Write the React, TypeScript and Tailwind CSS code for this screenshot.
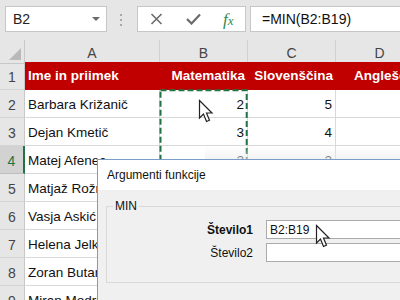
import React from "react";

const Cursor = () => (
  <svg width="17" height="26" viewBox="0 0 17 26">
    <path
      d="M1.5 1.5 L1.5 19 L5.5 15 L8.5 22.5 L11.5 21.2 L8.5 14 L14 14 Z"
      fill="white"
      stroke="#222"
      strokeWidth="1.2"
      strokeLinejoin="miter"
    />
  </svg>
);

const rows: [string, string, string][] = [
  ["Barbara Križanič", "2", "5"],
  ["Dejan Kmetič", "3", "4"],
  ["Matej Afenec", "2", "2"],
  ["Matjaž Rožman", "4", "3"],
  ["Vasja Askić", "5", "5"],
  ["Helena Jelkič", "3", "4"],
  ["Zoran Butara", "4", "2"],
  ["Miran Modrič", "5", "3"],
];

export default function App() {
  return (
    <div className="relative w-[400px] h-[300px] overflow-hidden bg-white font-['Liberation_Sans',sans-serif]">
      {/* toolbar */}
      <div className="h-[40px] bg-[#e6e6e6] flex items-start pt-[6px]">
        <div className="ml-[5px] w-[102px] h-[26px] shrink-0 bg-white border border-[#c6c6c6] flex items-center justify-between pl-[7px] pr-[6px]">
          <span className="text-[14px] text-[#222]">B2</span>
          <span className="w-0 h-0 border-l-[4px] border-r-[4px] border-t-[4px] border-l-transparent border-r-transparent border-t-[#6a6a6a]" />
        </div>
        <div className="ml-[13px] mt-[8px] flex flex-col gap-[3px] shrink-0">
          <span className="w-[2px] h-[2px] bg-[#a8a8a8]" />
          <span className="w-[2px] h-[2px] bg-[#a8a8a8]" />
          <span className="w-[2px] h-[2px] bg-[#a8a8a8]" />
        </div>
        <div className="ml-[15px] w-[109px] h-[26px] shrink-0 bg-white border border-[#c6c6c6] flex items-center">
          <svg className="ml-[12px]" width="13" height="12" viewBox="0 0 13 12">
            <path d="M1.5 1 L11.5 11 M11.5 1 L1.5 11" stroke="#6b6b6b" strokeWidth="1.6" />
          </svg>
          <svg className="ml-[23px]" width="15" height="12" viewBox="0 0 15 12">
            <path d="M1 6 L5.5 10.5 L14 1.5" stroke="#6b6b6b" strokeWidth="2.2" fill="none" />
          </svg>
          <span className="ml-[22px] font-['Liberation_Serif',serif] italic text-[16px] leading-none text-[#2f8a4e]">
            <span className="text-[17px]">f</span>
            <span className="text-[13px]">x</span>
          </span>
        </div>
        <div className="ml-[4px] flex-1 h-[26px] bg-white border border-r-0 border-[#c6c6c6] flex items-center pl-[11px] text-[14px] text-[#111]">
          =MIN(B2:B19)
        </div>
      </div>

      {/* column headers */}
      <div className="grid grid-cols-[25px_135px_88px_88px_88px] h-[22px] bg-[#e6e6e6] text-[14px] text-[#444]">
        <div className="relative border-r border-[#c8c8c8] border-b border-b-[#c8c8c8]">
          <svg className="absolute right-[3px] bottom-[3px]" width="12" height="12" viewBox="0 0 12 12">
            <path d="M12 0 L12 12 L0 12 Z" fill="#b9b9b9" />
          </svg>
        </div>
        {["A", "B", "C", "D"].map((c) => (
          <div key={c} className="flex items-center justify-center pt-[3px] border-r border-[#d0d0d0]">
            {c}
          </div>
        ))}
      </div>

      {/* row 1 */}
      <div className="grid grid-cols-[25px_135px_88px_88px_88px] h-[28px] text-[13.5px]">
        <div className="bg-[#e6e6e6] border-r border-[#c8c8c8] border-b border-b-[#d4d4d4] flex items-end justify-center pb-[1px] text-[14px] text-[#444]">
          1
        </div>
        <div className="bg-[#c00000] text-white font-bold flex items-end pl-[3px] pb-[4px] whitespace-nowrap">
          Ime in priimek
        </div>
        <div className="bg-[#c00000] text-white font-bold flex items-end justify-end pr-[3px] pb-[4px] whitespace-nowrap">
          Matematika
        </div>
        <div className="bg-[#c00000] text-white font-bold flex items-end justify-end pr-[3px] pb-[4px] whitespace-nowrap">
          Slovenščina
        </div>
        <div className="bg-[#c00000] text-white font-bold flex items-end pl-[18px] pb-[4px] whitespace-nowrap overflow-hidden">
          Angleščina
        </div>
      </div>

      {/* data rows */}
      {rows.map(([name, b, c], i) => {
        const n = i + 2;
        const sel = n === 4;
        return (
          <div key={n} className="grid grid-cols-[25px_135px_88px_88px_88px] h-[28px] text-[13.5px] text-[#111]">
            <div
              className={
                sel
                  ? "bg-[#d2d2d2] border-r-2 border-[#217346] border-b border-b-[#bdbdbd] flex items-end justify-center pb-[1px] text-[14px] text-[#217346]"
                  : "bg-[#e6e6e6] border-r border-[#c8c8c8] border-b border-b-[#d4d4d4] flex items-end justify-center pb-[1px] text-[14px] text-[#444]"
              }
            >
              {n}
            </div>
            <div className="border-r border-b border-[#d9d9d9] flex items-end pl-[3px] pb-[2px] whitespace-nowrap">
              {name}
            </div>
            <div className="border-r border-b border-[#d9d9d9] flex items-end justify-end pr-[3px] pb-[2px]">
              {b}
            </div>
            <div className="border-r border-b border-[#d9d9d9] flex items-end justify-end pr-[3px] pb-[2px]">
              {c}
            </div>
            <div className="border-r border-b border-[#d9d9d9]" />
          </div>
        );
      })}

      {/* copy selection marquee */}
      <svg className="absolute left-0 top-0 pointer-events-none" width="400" height="300">
        <rect x="160.5" y="90.3" width="86.2" height="300" fill="none" stroke="#217346" strokeWidth="2" strokeDasharray="6 3" />
      </svg>

      {/* shadow above dialog */}
      <div className="absolute left-[205px] top-[146px] w-[195px] h-[13px] bg-gradient-to-b from-transparent to-[#ececec] opacity-60" />

      {/* dialog */}
      <div className="absolute left-[97px] top-[159px] w-[330px] h-[160px] border border-[#7a9cc8] bg-[#f0f0f0] flex flex-col font-['Liberation_Sans',sans-serif]">
        <div className="h-[30px] bg-white flex items-center pl-[9px] text-[12px] text-[#111]">
          Argumenti funkcije
        </div>
        <fieldset className="ml-[8px] mt-[7px] border border-[#d9d9d9] pb-[20px]">
          <legend className="ml-[6px] px-[2px] text-[12px] text-[#111]">MIN</legend>
          <div className="flex flex-col gap-[4px] mt-[5px]">
            <div className="flex items-center">
              <div className="w-[146px] text-right text-[12px] font-bold text-[#111]">Število1</div>
              <div className="ml-[13px] flex-1 h-[19px] bg-white border border-[#ababab] flex items-center pl-[3px] text-[12px] text-[#111]">
                B2:B19
              </div>
            </div>
            <div className="flex items-center">
              <div className="w-[146px] text-right text-[12px] text-[#111]">Število2</div>
              <div className="ml-[13px] flex-1 h-[19px] bg-white border border-[#ababab]" />
            </div>
          </div>
        </fieldset>
      </div>

      {/* cursors */}
      <div className="absolute left-[198px] top-[99px]">
        <Cursor />
      </div>
      <div className="absolute left-[315px] top-[224px]">
        <Cursor />
      </div>
    </div>
  );
}
